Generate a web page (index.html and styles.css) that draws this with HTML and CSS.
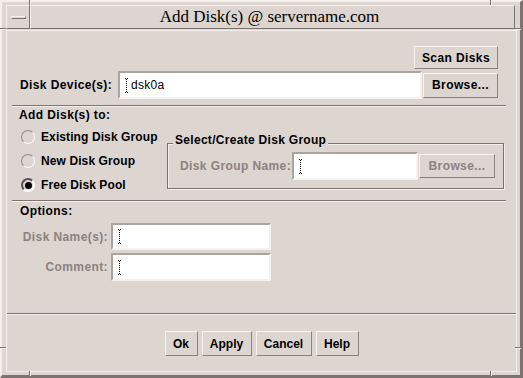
FILE: index.html
```html
<!DOCTYPE html>
<html lang="en">
<head>
  <meta charset="UTF-8" />
  <title>Add Disk(s) @ servername.com</title>
  <link rel="stylesheet" href="styles.css">
</head>
<body>
<div class="window">
  <!-- resize handle notches on the frame -->
  <span class="tick tick-v tv-tl"></span>
  <span class="tick tick-v tv-tr"></span>
  <span class="tick tick-v tv-bl"></span>
  <span class="tick tick-v tv-br"></span>
  <span class="tick tick-h th-lt"></span>
  <span class="tick tick-h th-lb"></span>
  <span class="tick tick-h th-rt"></span>
  <span class="tick tick-h th-rb"></span>

  <div class="titlebar">
    <div class="menu-btn"><span class="menu-dash"></span></div>
    <div class="title">Add Disk(s) @ servername.com</div>
  </div>

  <div class="client">
    <div class="scan-row"><button class="btn btn-scan">Scan Disks</button></div>

    <div class="device-row">
      <label class="lbl lbl-device">Disk Device(s):</label>
      <div class="field field-device">
        <svg class="ibeam" width="5" height="15" viewBox="0 0 5 15"><path d="M1 0.5h1M3 0.5h1M2.5 1v13M1 14.5h1M3 14.5h1" stroke="#000" fill="none" stroke-dasharray="1 1"/></svg>
        <span class="value">dsk0a</span>
      </div>
      <button class="btn btn-browse">Browse...</button>
    </div>

    <div class="sep"></div>

    <div class="heading heading-add">Add Disk(s) to:</div>
    <div class="add-body">
      <div class="radios">
        <div class="radio-row"><span class="radio"></span>Existing Disk Group</div>
        <div class="radio-row"><span class="radio"></span>New Disk Group</div>
        <div class="radio-row"><span class="radio on"></span>Free Disk Pool</div>
      </div>
      <div class="group">
        <div class="group-title">Select/Create Disk Group</div>
        <div class="group-row">
          <span class="lbl dim lbl-group">Disk Group Name:</span>
          <div class="field field-group">
            <svg class="ibeam" width="5" height="15" viewBox="0 0 5 15"><path d="M1 0.5h1M3 0.5h1M2.5 1v13M1 14.5h1M3 14.5h1" stroke="#000" fill="none" stroke-dasharray="1 1"/></svg>
          </div>
          <button class="btn btn-dim">Browse...</button>
        </div>
      </div>
    </div>

    <div class="sep sep-opts"></div>

    <div class="heading heading-opts">Options:</div>
    <div class="opt-row opt-name">
      <span class="lbl dim lbl-opt">Disk Name(s):</span>
      <div class="field field-opt">
        <svg class="ibeam" width="5" height="15" viewBox="0 0 5 15"><path d="M1 0.5h1M3 0.5h1M2.5 1v13M1 14.5h1M3 14.5h1" stroke="#000" fill="none" stroke-dasharray="1 1"/></svg>
      </div>
    </div>
    <div class="opt-row opt-comment">
      <span class="lbl dim lbl-opt">Comment:</span>
      <div class="field field-opt">
        <svg class="ibeam" width="5" height="15" viewBox="0 0 5 15"><path d="M1 0.5h1M3 0.5h1M2.5 1v13M1 14.5h1M3 14.5h1" stroke="#000" fill="none" stroke-dasharray="1 1"/></svg>
      </div>
    </div>

    <div class="sep sep-full"></div>

    <div class="actions">
      <button class="btn btn-ok">Ok</button>
      <button class="btn btn-apply">Apply</button>
      <button class="btn btn-cancel">Cancel</button>
      <button class="btn btn-help">Help</button>
    </div>
  </div>
</div>
</body>
</html>
```

FILE: styles.css
```css
html,body{margin:0;padding:0;background:#dcd5d0;}
body{font-family:"Liberation Sans",Arial,sans-serif;font-size:12px;color:#000;}

/* ---------- window frame ---------- */
.window{position:relative;width:523px;height:378px;box-sizing:border-box;border-style:solid;border-width:2px 3px 3px 2px;border-color:#f4f1ed #7e7270 #7e7270 #f4f1ed;padding:3px 3px 3px 4px;}
.tick{position:absolute;}
.tick-v{width:1px;height:5px;background:#7e7270;border-right:1px solid #f4f1ed;}
.tick-h{width:6px;height:1px;background:#7e7270;border-bottom:1px solid #f4f1ed;}
.tv-tl{left:27px;top:-2px;}
.tv-tr{left:488px;top:-2px;}
.tv-bl{left:27px;top:369px;}
.tv-br{left:488px;top:369px;}
.th-lt{left:-2px;top:26px;}
.th-lb{left:-2px;top:345px;}
.th-rt{left:513px;top:26px;}
.th-rb{left:513px;top:345px;}

.titlebar{display:flex;height:24px;margin-right:2px;}
.menu-btn,.title{box-sizing:border-box;border:1px solid;border-color:#f4f1ed #7e7270 #7e7270 #f4f1ed;}
.menu-btn{width:24px;display:flex;align-items:center;justify-content:center;}
.menu-dash{width:13px;height:1px;border:1px solid;border-color:#f4f1ed #7e7270 #7e7270 #f4f1ed;}
.title{flex:1;text-align:center;font-family:"Liberation Serif","Times New Roman",serif;font-size:17px;line-height:22px;padding-right:6px;}

.client{margin-top:1px;height:342px;box-sizing:border-box;border:1px solid #f4f1ed;}

/* ---------- widgets ---------- */
.btn{box-sizing:border-box;margin:0;padding:0;background:#dcd5d0;border:1px solid;border-color:#f7f4f0 #8a807c #8a807c #f7f4f0;font-family:"Liberation Sans",Arial,sans-serif;font-weight:bold;font-size:12px;letter-spacing:.4px;color:#000;}
.btn-dim{color:#8a8380;width:76px;height:24px;margin-left:1px;}
.field{box-sizing:border-box;background:#fff;border:2px solid;border-color:#aba39e #f6f3ef #f6f3ef #aba39e;display:flex;align-items:center;padding-left:4px;}
.ibeam{display:block;flex:none;}
.value{margin-left:2px;font-size:12px;letter-spacing:.3px;}
.lbl{font-weight:bold;white-space:nowrap;letter-spacing:.4px;}
.dim{color:#8a8380;}

.sep{height:0;margin:6px 10px 0 5px;border-top:1px solid #7e7270;border-bottom:1px solid #f4f1ed;}
.sep-opts{margin-top:3px;}
.sep-full{margin:32px 0 0 0;}

.heading{font-weight:bold;height:14px;line-height:14px;letter-spacing:.4px;}

/* ---------- disk device ---------- */
.scan-row{display:flex;justify-content:flex-end;padding:15px 18px 0 0;}
.btn-scan{width:84px;height:23px;}
.device-row{display:flex;align-items:center;margin-top:2px;height:28px;padding-left:13px;}
.lbl-device{width:98px;}
.field-device{width:304px;height:28px;}
.btn-browse{width:75px;height:25px;margin-left:1px;}

/* ---------- add to ---------- */
.heading-add{margin-top:1px;padding-left:12px;}
.add-body{display:flex;}
.radios{width:160px;box-sizing:border-box;padding:3px 0 0 14px;}
.radio-row{display:flex;align-items:center;height:24px;font-weight:bold;white-space:nowrap;letter-spacing:.1px;}
.radio{width:14px;height:14px;box-sizing:border-box;border-radius:50%;border:1px solid;border-color:#948c88 #fbfaf8 #fbfaf8 #948c88;margin-right:6px;display:flex;align-items:center;justify-content:center;}
.radio.on{border-width:2px;border-color:#5a5250 #fbfaf8 #fbfaf8 #5a5250;}
.radio.on::after{content:"";width:7px;height:7px;border-radius:50%;background:#000;}

.group{width:337px;height:46px;box-sizing:border-box;margin-top:21px;border:1px solid #7e7270;box-shadow:inset 1px 1px 0 #f4f1ed,1px 1px 0 #f4f1ed;padding:0 0 0 12px;}
.group-title{display:block;width:max-content;margin:-11px 0 0 -7px;padding:0 2px;background:#dcd5d0;font-weight:bold;height:14px;line-height:14px;letter-spacing:.3px;}
.group-row{display:flex;align-items:center;height:28px;margin-top:5px;}
.lbl-group{width:112px;}
.field-group{width:126px;height:28px;}

/* ---------- options ---------- */
.heading-opts{margin-top:2px;padding-left:13px;}
.opt-row{display:flex;align-items:center;padding-left:13px;}
.opt-name{margin-top:5px;height:27px;}
.opt-comment{margin-top:3px;height:28px;}
.lbl-opt{width:91px;box-sizing:border-box;text-align:right;padding-right:3px;}
.field-opt{width:160px;height:100%;}

/* ---------- action buttons ---------- */
.actions{display:flex;justify-content:center;gap:4px;margin-top:16px;}
.actions .btn{height:25px;letter-spacing:0;}
.btn-ok{width:33px;}
.btn-apply{width:50px;}
.btn-cancel{width:56px;}
.btn-help{width:43px;}
```
